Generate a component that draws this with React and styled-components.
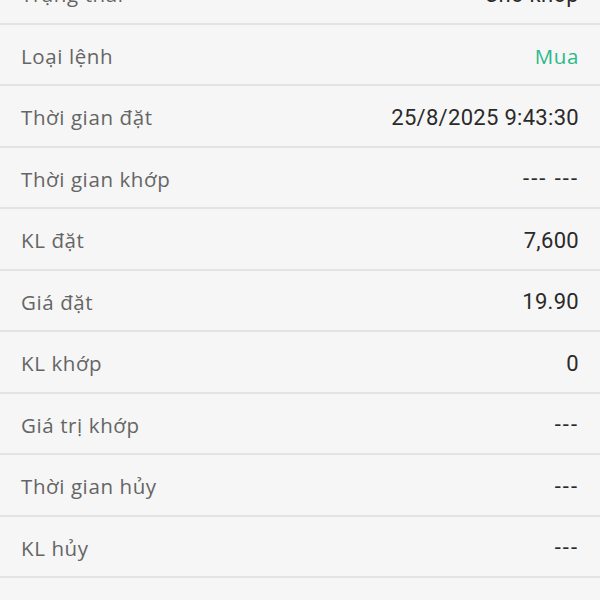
import React from "react";
import styled, { createGlobalStyle } from "styled-components";

const GlobalStyle = createGlobalStyle`
  html, body {
    margin: 0;
    padding: 0;
    background-color: #f6f6f6;
    overflow: hidden;
  }
`;

const Page = styled.div`
  width: 600px;
  height: 600px;
  overflow: hidden;
  background-color: #f6f6f6;
`;

const List = styled.div`
  display: flex;
  flex-direction: column;
  margin-top: -37px;
`;

const Row = styled.div`
  box-sizing: border-box;
  height: 61.5px;
  display: flex;
  align-items: center;
  justify-content: space-between;
  padding: 3px 21px 0;
  border-bottom: 2px solid #e3e3e3;
`;

const Label = styled.span`
  font-family: "Open Sans", "Lato", sans-serif;
  font-size: 20.5px;
  letter-spacing: 0.6px;
  color: #656565;
`;

const Value = styled.span`
  font-family: ${(p) => (p.$accent ? '"Open Sans", "Lato", sans-serif' : '"Roboto", "Noto Sans", sans-serif')};
  font-size: ${(p) => (p.$accent ? "20.5px" : "22px")};
  font-weight: 400;
  letter-spacing: ${(p) => (p.$dash ? "2px" : p.$accent ? "0.6px" : "0.3px")};
  color: ${(p) => (p.$accent ? "#2bb98c" : "#2a2a2a")};
`;

const rows = [
  { label: "Trạng thái", value: "Chờ khớp" },
  { label: "Loại lệnh", value: "Mua", accent: true },
  { label: "Thời gian đặt", value: "25/8/2025 9:43:30" },
  { label: "Thời gian khớp", value: "--- ---" },
  { label: "KL đặt", value: "7,600" },
  { label: "Giá đặt", value: "19.90" },
  { label: "KL khớp", value: "0" },
  { label: "Giá trị khớp", value: "---" },
  { label: "Thời gian hủy", value: "---" },
  { label: "KL hủy", value: "---" },
  { label: "", value: "" },
];

export default function App() {
  return (
    <Page>
      <GlobalStyle />
      <List>
        {rows.map((r, i) => (
          <Row key={i}>
            <Label>{r.label}</Label>
            <Value $accent={r.accent} $dash={r.value.startsWith("-")}>
              {r.value}
            </Value>
          </Row>
        ))}
      </List>
    </Page>
  );
}
